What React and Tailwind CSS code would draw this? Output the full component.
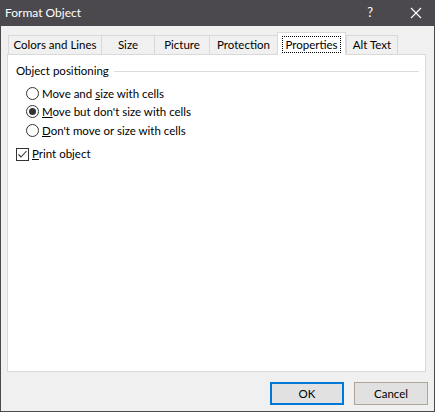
import React from "react";

const font = { fontFamily: 'Lato, "Noto Sans", sans-serif' };

function Radio({ checked, children }) {
  return (
    <div className="flex items-center h-[18.5px]">
      <span className="w-[13px] h-[13px] rounded-full border border-[#333] bg-white flex items-center justify-center">
        {checked && <span className="w-[7px] h-[7px] rounded-full bg-[#333]" />}
      </span>
      <span className="ml-[3px] text-[11.5px] text-black leading-none whitespace-nowrap">{children}</span>
    </div>
  );
}

export default function App() {
  const tabs = ["Colors and Lines", "Size", "Picture", "Protection", "Properties", "Alt Text"];
  const widths = ["w-[94px]", "w-[53px]", "w-[55px]", "w-[67px]", "w-[69px]", "w-[52px]"];
  return (
    <div style={font} className="w-[435px] h-[412px] flex flex-col bg-[#f0f0f0] border-l border-r border-b border-[#4b494d] select-none">
      <div className="h-[26px] bg-[#4b494d] flex items-center text-white text-[12px] shrink-0">
        <span className="ml-[4px]">Format Object</span>
        <span className="ml-auto mr-[37px] text-[13px]">?</span>
        <svg width="12" height="12" viewBox="0 0 12 12" className="mr-[12px]">
          <path d="M1 1 L11 11 M11 1 L1 11" stroke="white" strokeWidth="1.2" />
        </svg>
      </div>
      <div className="flex-1 flex flex-col px-[6px] pt-[6px]">
        <div className="flex items-end h-[22px] pl-[1px] relative z-10">
          {tabs.map((t, i) => {
            const sel = t === "Properties";
            return (
              <div
                key={t}
                className={
                  sel
                    ? `${widths[i]} h-[23px] -mb-[1px] bg-white border border-[#d9d9d9] border-b-0 flex items-start justify-center pt-[3px] text-[11.5px] text-black whitespace-nowrap`
                    : `${widths[i]} h-[19px] bg-[#f0f0f0] border border-[#d9d9d9] border-b-0 ${i > 0 && tabs[i - 1] !== "Properties" ? "border-l-0" : ""} ${tabs[i + 1] === "Properties" ? "border-r-0" : ""} flex items-center justify-center text-[11.5px] text-black whitespace-nowrap`
                }
              >
                {sel ? (
                  <span className="border border-dotted border-black px-[2px] leading-[15px]">{t}</span>
                ) : (
                  <span className="leading-none">{t}</span>
                )}
              </div>
            );
          })}
        </div>
        <div className="h-[318px] w-[419px] bg-white border border-[#d9d9d9] flex flex-col pl-[8px] pt-[8px]">
          <div className="flex items-center h-[16px]">
            <span className="text-[11.5px] text-black leading-none whitespace-nowrap">Object positioning</span>
            <div className="ml-[5px] mr-[6px] flex-1 h-px bg-[#dcdcdc]" />
          </div>
          <div className="flex flex-col pl-[10px] mt-[5px]">
            <Radio>
              Move and <u>s</u>ize with cells
            </Radio>
            <Radio checked>
              <u>M</u>ove but don't size with cells
            </Radio>
            <Radio>
              <u>D</u>on't move or size with cells
            </Radio>
          </div>
          <div className="flex items-center mt-[8px]">
            <span className="w-[13px] h-[13px] border border-[#333] bg-white flex items-center justify-center">
              <svg width="11" height="11" viewBox="0 0 11 11">
                <path d="M1.5 5.5 L4 8 L9.5 2" stroke="#333" strokeWidth="1.1" fill="none" />
              </svg>
            </span>
            <span className="ml-[3px] text-[11.5px] text-black leading-none whitespace-nowrap">
              <u>P</u>rint object
            </span>
          </div>
        </div>
        <div className="flex justify-end gap-[10px] mt-[10px]">
          <button className="w-[74px] h-[23px] bg-[#e1e1e1] border-2 border-[#0078d7] text-[11.5px] text-black leading-none">
            OK
          </button>
          <button className="w-[74px] h-[23px] bg-[#e1e1e1] border border-[#ada49a] text-[11.5px] text-black leading-none">
            Cancel
          </button>
        </div>
      </div>
    </div>
  );
}
